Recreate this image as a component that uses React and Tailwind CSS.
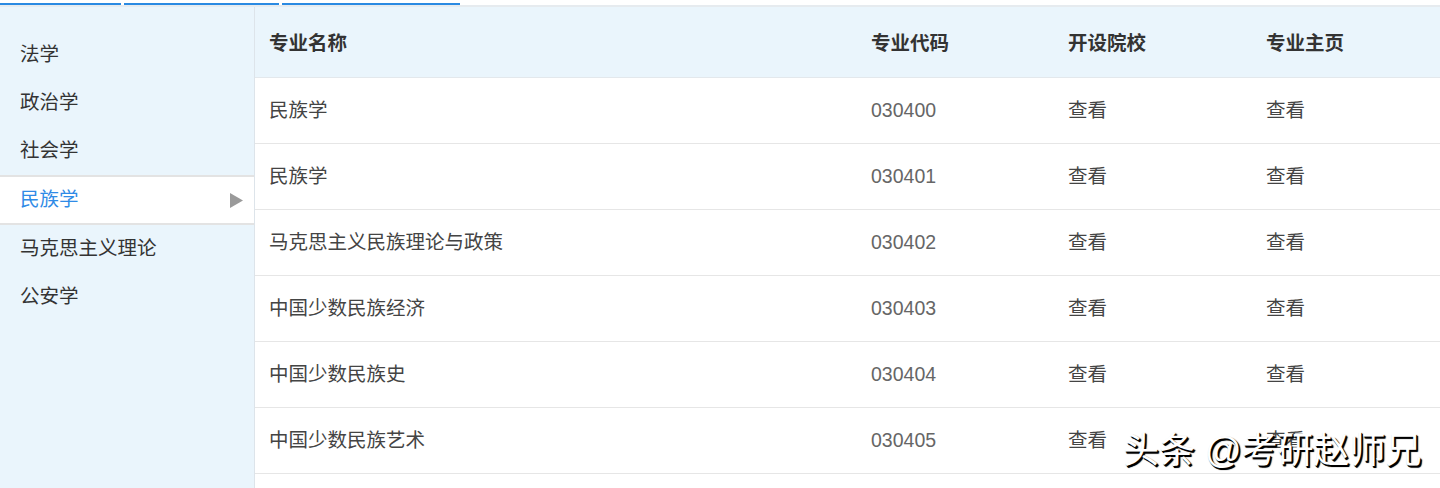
import React from "react";

const side = ["法学", "政治学", "社会学", "民族学", "马克思主义理论", "公安学"];
const rows = [
  ["民族学", "030400"],
  ["民族学", "030401"],
  ["马克思主义民族理论与政策", "030402"],
  ["中国少数民族经济", "030403"],
  ["中国少数民族史", "030404"],
  ["中国少数民族艺术", "030405"],
];

export default function App() {
  return (
    <div
      className="relative w-[1440px] h-[488px] overflow-hidden bg-white"
      style={{ fontFamily: '"Liberation Sans", "Noto Sans CJK SC", sans-serif' }}
    >
      <div className="h-[3px] bg-white" />
      <div className="flex h-[2px] gap-[3px]">
        <div className="w-[121px] bg-[#2a8ae2]" />
        <div className="w-[155px] bg-[#2a8ae2]" />
        <div className="w-[178px] bg-[#2a8ae2]" />
      </div>
      <div className="h-[2px] bg-[#e6ebef]" />
      <div className="flex h-[481px]">
        <div className="w-[255px] shrink-0 bg-[#eaf5fc] border-r border-[#dde4ea] pt-[24px] text-[19.5px] text-[#333]">
          {side.map((s) =>
            s === "民族学" ? (
              <div
                key={s}
                className="flex items-center justify-between h-[50px] border-y-2 border-[#e3e3e3] bg-white pl-[20px] pr-[11px] text-[#2f8be6]"
              >
                <span>{s}</span>
                <svg width="13" height="15" viewBox="0 0 13 15">
                  <polygon points="0,0 13,7.5 0,15" fill="#9a9a9a" />
                </svg>
              </div>
            ) : (
              <div key={s} className="flex items-center h-[48px] pl-[20px]">
                {s}
              </div>
            )
          )}
        </div>
        <div className="flex-1 bg-white">
          <div className="grid grid-cols-[602px_197px_198px_1fr] items-center h-[71px] pl-[14px] pt-[3px] bg-[#eaf5fc] border-b border-[#e3e8ec] text-[19.5px] font-bold text-[#333]">
            <div>专业名称</div>
            <div>专业代码</div>
            <div>开设院校</div>
            <div>专业主页</div>
          </div>
          {rows.map(([name, code]) => (
            <div
              key={code}
              className="grid grid-cols-[602px_197px_198px_1fr] items-center h-[66px] pl-[14px] pt-[1px] border-b border-[#e6e6e6] text-[19.5px] text-[#444]"
            >
              <div>{name}</div>
              <div className="text-[#666]">{code}</div>
              <div>查看</div>
              <div>查看</div>
            </div>
          ))}
        </div>
      </div>
      <div
        className="absolute left-[1123px] top-[433px] text-[36px] leading-none text-white whitespace-nowrap"
        style={{ textShadow: "1.5px 1.5px 0 #000, 1px 1px 1px #000, 2px 2px 1px #222" }}
      >
        头条 @考研赵师兄
      </div>
    </div>
  );
}
